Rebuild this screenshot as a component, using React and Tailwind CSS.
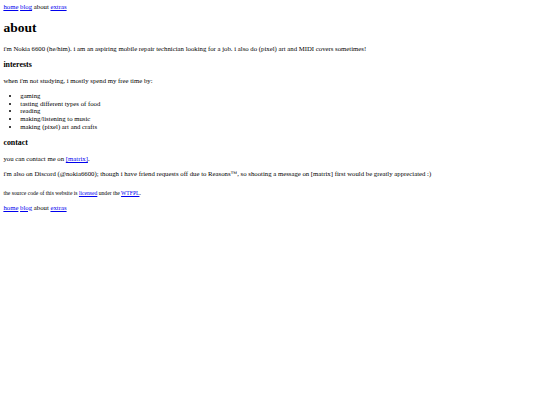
const navLinks = [
  { label: 'home', href: true },
  { label: 'blog', href: true },
  { label: 'about', href: false },
  { label: 'extras', href: true }
]

const interests = [
  'gaming',
  'tasting different types of food',
  'reading',
  'making/listening to music',
  'making (pixel) art and crafts'
]

function Nav() {
  return (
    <div>
      {navLinks.map((item, i) => (
        <span key={item.label}>
          {item.href ? (
            <a href="#" className="text-[#0000ee] underline">{item.label}</a>
          ) : (
            item.label
          )}
          {i < navLinks.length - 1 ? ' ' : ''}
        </span>
      ))}
    </div>
  )
}

function Link({ children }) {
  return <a href="#" className="text-[#0000ee] underline">{children}</a>
}

export default function App() {
  return (
    <div className="min-h-[405px] bg-white p-[3.375px] font-['Liberation_Serif',serif] text-[6.75px] leading-[1.15] text-black">
      <Nav />

      <h1 className="my-[9.05px] text-[13.5px] font-bold leading-[1.15]">about</h1>

      <p className="my-[6.75px]">
        i'm Nokia 6600 (he/him). i am an aspiring mobile repair technician looking for a job. i also do (pixel) art and MIDI covers sometimes!
      </p>

      <h3 className="my-[7.9px] text-[7.9px] font-bold leading-[1.15]">interests</h3>
      <p className="my-[6.75px]">when i'm not studying, i mostly spend my free time by:</p>
      <ul className="my-[6.75px] list-disc pl-[16.875px]">
        {interests.map((item) => (
          <li key={item}>{item}</li>
        ))}
      </ul>

      <h3 className="my-[7.9px] text-[7.9px] font-bold leading-[1.15]">contact</h3>
      <p className="my-[6.75px]">
        you can contact me on <Link>[matrix]</Link>.
      </p>
      <p className="mt-[6.75px] mb-[12.7px]">
        i'm also on Discord (@nokia6600); though i have friend requests off due to Reasons™, so shooting a message on [matrix] first would be greatly appreciated :)
      </p>

      <p className="mb-[6.75px] text-[5.625px] leading-[1.15]">
        the source code of this website is <Link>licensed</Link> under the <Link>WTFPL</Link>.
      </p>

      <Nav />
    </div>
  )
}
